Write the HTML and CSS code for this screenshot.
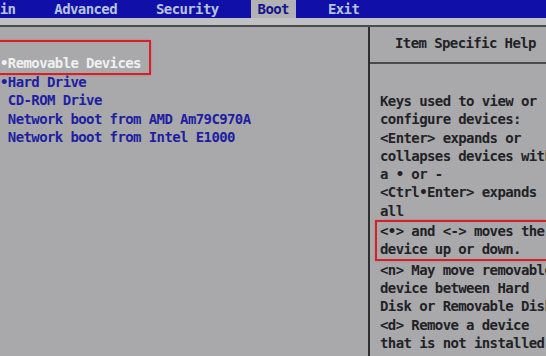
FILE: index.html
```html
<!doctype html>
<html lang="en">
<head>
  <meta charset="utf-8">
  <title>BIOS Setup Utility - Boot</title>
  <meta name="viewport" content="width=device-width, initial-scale=1">
  <link rel="stylesheet" href="styles.css">
</head>
<body>
  <div class="screen">
    <div class="menubar">
      <span class="tab">Main</span>
      <span class="tab">Advanced</span>
      <span class="tab">Security</span>
      <span class="tab active">Boot</span>
      <span class="tab">Exit</span>
    </div>
    <div class="band"></div>

    <div class="main">
      <div class="list">
        <div class="item selected">•Removable Devices<span class="mark-item"></span></div>
        <div class="item">•Hard Drive</div>
        <div class="item"> CD-ROM Drive</div>
        <div class="item"> Network boot from AMD Am79C970A</div>
        <div class="item"> Network boot from Intel E1000</div>
      </div>

      <div class="help">
        <div class="help-title">Item Specific Help</div>
        <div class="help-text">
          <div class="line">Keys used to view or</div>
          <div class="line">configure devices:</div>
          <div class="line">&lt;Enter&gt; expands or</div>
          <div class="line">collapses devices with</div>
          <div class="line">a • or -</div>
          <div class="line">&lt;Ctrl•Enter&gt; expands</div>
          <div class="line">all</div>
          <div class="marked">
            <div class="line">&lt;•&gt; and &lt;-&gt; moves the</div>
            <div class="line">device up or down.</div>
          </div>
          <div class="line">&lt;n&gt; May move removable</div>
          <div class="line">device between Hard</div>
          <div class="line">Disk or Removable Disk</div>
          <div class="line">&lt;d&gt; Remove a device</div>
          <div class="line">that is not installed.</div>
        </div>
      </div>
    </div>
  </div>
</body>
</html>
```

FILE: styles.css
```css
html,
body {
  margin: 0;
  padding: 0;
  background: #a9a9ab;
}

.screen {
  width: 546px;
  height: 356px;
  overflow: hidden;
  font-family: "DejaVu Sans Mono", "Liberation Mono", monospace;
  font-size: 14px;
  font-weight: bold;
  letter-spacing: -0.6px;
  color: #222226;
}

.menubar {
  height: 18px;
  background: #1010a8;
  display: flex;
  gap: 25px;
  margin-left: -23px;
  line-height: 18px;
}

.tab {
  padding: 0 7px;
  color: #b8c4dc;
  white-space: pre;
}

.tab.active {
  background: #b2b2b4;
  color: #14148c;
}

.band {
  height: 7px;
  background: #c2c2c4;
  border-bottom: 2px solid #4c4c50;
}

.main {
  display: flex;
  height: 329px;
}

.list {
  flex: none;
  width: 368px;
  padding-top: 27px;
  box-sizing: border-box;
}

.item {
  position: relative;
  height: 18.5px;
  line-height: 18.5px;
  color: #1e1ea0;
  white-space: pre;
}

.item.selected {
  color: #f0f0f2;
}

.mark-item {
  position: absolute;
  left: -3px;
  top: -14px;
  width: 150px;
  height: 31px;
  border: 2px solid #d42026;
  box-shadow: 0 0 2px rgba(230, 80, 80, 0.6);
}

.help {
  flex: 1;
  min-width: 0;
  overflow: hidden;
  border-left: 2px solid #2e2e32;
}

.help-title {
  height: 37px;
  line-height: 33px;
  padding-left: 25px;
  border-bottom: 2px solid #4a4a4e;
  box-sizing: border-box;
  white-space: pre;
}

.help-text {
  padding: 28px 0 0 10px;
  line-height: 18.3px;
}

.line {
  white-space: pre;
}

.marked {
  margin-left: -5px;
  padding-left: 3px;
  border: 2px solid #d42026;
  border-right: none;
  box-shadow: 0 0 2px rgba(230, 80, 80, 0.6);
}
```
